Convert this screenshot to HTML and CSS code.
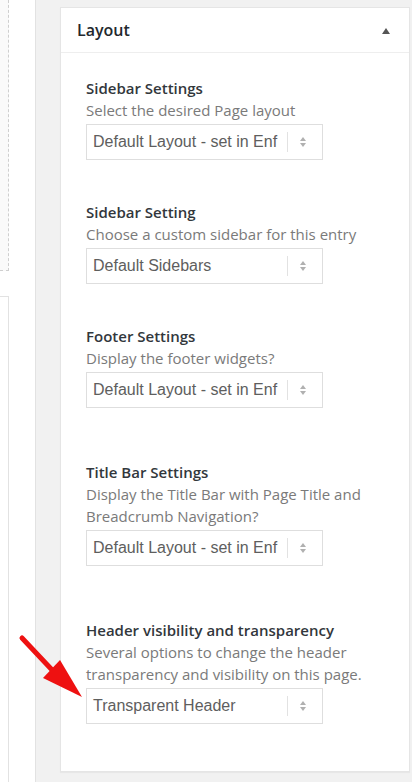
FILE: index.html
```html
<!DOCTYPE html>
<html>

<head>
    <title>Layout</title>
    <link rel="stylesheet" href="styles.css">
</head>

<body>
    <div class="screen">
        <div class="left-col">
            <div class="dash-box"></div>
            <div class="lower-box"></div>
        </div>

        <div class="postbox">
            <div class="postbox-header">
                <h2>Layout</h2>
                <span class="toggle"></span>
            </div>

            <div class="inside">
                <div class="field">
                    <h4>Sidebar Settings</h4>
                    <p>Select the desired Page layout</p>
                    <div class="select">
                        <span class="value">Default Layout - set in Enf</span>
                        <span class="divider"></span>
                        <span class="arrows"><i class="up"></i><i class="down"></i></span>
                    </div>
                </div>

                <div class="field">
                    <h4>Sidebar Setting</h4>
                    <p>Choose a custom sidebar for this entry</p>
                    <div class="select">
                        <span class="value">Default Sidebars</span>
                        <span class="divider"></span>
                        <span class="arrows"><i class="up"></i><i class="down"></i></span>
                    </div>
                </div>

                <div class="field">
                    <h4>Footer Settings</h4>
                    <p>Display the footer widgets?</p>
                    <div class="select">
                        <span class="value">Default Layout - set in Enf</span>
                        <span class="divider"></span>
                        <span class="arrows"><i class="up"></i><i class="down"></i></span>
                    </div>
                </div>

                <div class="field extra">
                    <h4>Title Bar Settings</h4>
                    <p>Display the Title Bar with Page Title and Breadcrumb Navigation?</p>
                    <div class="select">
                        <span class="value">Default Layout - set in Enf</span>
                        <span class="divider"></span>
                        <span class="arrows"><i class="up"></i><i class="down"></i></span>
                    </div>
                </div>

                <div class="field extra">
                    <h4>Header visibility and transparency</h4>
                    <p>Several options to change the header transparency and visibility on this page.</p>
                    <div class="select">
                        <span class="value">Transparent Header</span>
                        <span class="divider"></span>
                        <span class="arrows"><i class="up"></i><i class="down"></i></span>
                    </div>
                </div>
            </div>
        </div>

        <!-- red pointer drawn over the screenshot -->
        <svg class="pointer" width="75" height="75" viewBox="0 0 75 75">
            <line x1="8" y1="8" x2="40" y2="42" stroke="#ee1111" stroke-width="5" stroke-linecap="round" />
            <polygon points="68,67 29,48 46,30" fill="#ee1111" />
        </svg>
    </div>
</body>

</html>
```

FILE: styles.css
```css
body {
    margin: 0;
    background-color: #f1f1f1;
    font-family: 'Open Sans', 'Noto Sans', sans-serif;
}

.screen {
    position: relative;
    display: flex;
    align-items: flex-start;
    height: 782px;
    overflow: hidden;
}

.left-col {
    display: flex;
    flex-direction: column;
    flex-shrink: 0;
    width: 35px;
    height: 782px;
    background-color: #fff;
    border-right: 1px solid #e2e2e2;
}

.dash-box {
    width: 8px;
    height: 270px;
    background-color: #fafafa;
    border-right: 1px dashed #cfcfcf;
    border-bottom: 1px dashed #cfcfcf;
}

.lower-box {
    flex: 1;
    width: 8px;
    margin-top: 25px;
    border-top: 1px solid #e2e2e2;
    border-right: 1px solid #e2e2e2;
}

.postbox {
    flex-shrink: 0;
    box-sizing: border-box;
    width: 350px;
    height: 765px;
    margin: 7px 0 0 24px;
    background-color: #fff;
    border: 1px solid #e5e5e5;
    box-shadow: 0 1px 1px rgba(0, 0, 0, 0.04);
}

.postbox-header {
    display: flex;
    align-items: center;
    justify-content: space-between;
    height: 44px;
    padding: 0 19px 0 16px;
    border-bottom: 1px solid #eee;
}

.postbox-header h2 {
    margin: 0;
    font-size: 16px;
    font-weight: 600;
    color: #23282d;
}

.toggle {
    width: 0;
    height: 0;
    margin-top: 1px;
    border-left: 4px solid transparent;
    border-right: 4px solid transparent;
    border-bottom: 6px solid #555;
}

.inside {
    display: flex;
    flex-direction: column;
    gap: 41px;
    padding: 24px 20px 0 25px;
}

.field.extra {
    margin-top: 12px;
}

.field h4 {
    margin: 0;
    font-size: 15px;
    font-weight: 600;
    line-height: 22px;
    color: #32373c;
}

.field p {
    margin: 0;
    font-size: 15px;
    line-height: 22px;
    color: #7a7a7a;
}

.select {
    display: flex;
    align-items: center;
    box-sizing: border-box;
    width: 237px;
    height: 36px;
    margin-top: 3px;
    padding-left: 6px;
    border: 1px solid #dedede;
}

.value {
    width: 187px;
    white-space: nowrap;
    font-family: 'Liberation Sans', Arial, sans-serif;
    font-size: 16px;
    color: #5e5e5e;
}

.divider {
    width: 1px;
    height: 20px;
    margin-left: 7px;
    background-color: #e2e2e2;
}

.arrows {
    display: flex;
    flex-direction: column;
    gap: 2px;
    margin-left: 12px;
}

.arrows i {
    width: 0;
    height: 0;
    border-left: 3.5px solid transparent;
    border-right: 3.5px solid transparent;
}

.arrows .up {
    border-bottom: 4px solid #b0b0b0;
}

.arrows .down {
    border-top: 4px solid #b0b0b0;
}

.pointer {
    position: absolute;
    left: 14px;
    top: 630px;
}
```
